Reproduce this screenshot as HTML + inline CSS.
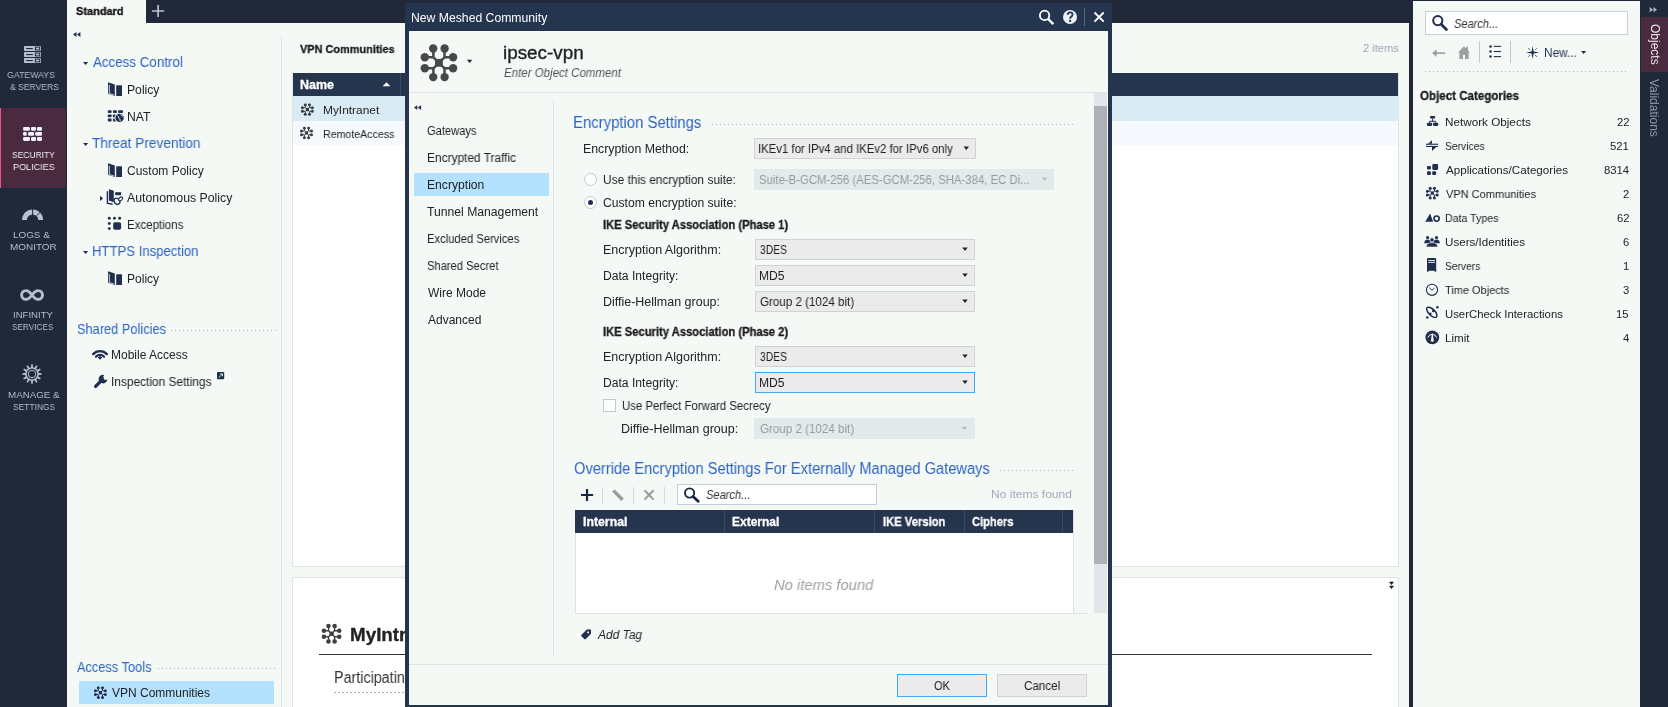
<!DOCTYPE html>
<html><head><meta charset="utf-8">
<style>
html,body{margin:0;padding:0;width:1668px;height:707px;overflow:hidden;background:#20283a;font-family:"Liberation Sans",sans-serif;}
.a{position:absolute;}
.t{position:absolute;white-space:nowrap;line-height:1;transform-origin:0 0;will-change:transform;}
svg{position:absolute;overflow:visible;}
.dd{position:absolute;background:#ebebeb;border:1px solid #cdd3d8;box-sizing:border-box;}
.dis{position:absolute;background:#e3eaeb;box-sizing:border-box;}
.dot{position:absolute;height:1px;background-image:linear-gradient(to right,#aab3bc 1px,transparent 1px);background-size:4px 1px;}
.sep{position:absolute;background:#dde3e8;}
</style></head><body>
<!-- left nav -->
<div class=a style="left:0;top:0;width:66px;height:707px;background:#20283a"></div>
<div class=a style="left:0;top:108px;width:66px;height:80px;background:#4a2a3f"></div>
<div class=a style="left:0;top:108px;width:1px;height:80px;background:#f0508a"></div>

<!-- top bar -->
<div class=a style="left:66px;top:0;width:1343px;height:23px;background:#20283a"></div>
<div class=a style="left:67px;top:0;width:79px;height:23px;background:#f5f9f6"></div>

<!-- left tree panel -->
<div class=a style="left:67px;top:23px;width:214px;height:684px;background:#f5f9f6"></div>

<!-- main area -->
<div class=a style="left:281px;top:23px;width:1128px;height:684px;background:#f5f9f6"></div>
<div class=a style="left:281px;top:36px;width:1px;height:671px;background:#dfe4e9"></div>
<div class=a style="left:292px;top:73px;width:1107px;height:494px;background:#fff;border-left:1px solid #dfe4e9;border-right:1px solid #dfe4e9;border-bottom:1px solid #dfe4e9;box-sizing:border-box"></div>
<div class=a style="left:293px;top:73px;width:1105px;height:23px;background:#26354e"></div>
<div class=a style="left:400px;top:73px;width:1px;height:23px;background:#3a4866"></div>
<div class=a style="left:293px;top:96px;width:1105px;height:25px;background:#d9ebf5"></div>
<div class=a style="left:293px;top:121px;width:1105px;height:24px;background:#f5f9fd"></div>
<div class=a style="left:292px;top:577px;width:1107px;height:130px;background:#fff;border-left:1px solid #dfe4e9;border-top:1px solid #dfe4e9;border-right:1px solid #dfe4e9;box-sizing:border-box"></div>
<div class=a style="left:319px;top:654px;width:1053px;height:1px;background:#333"></div>
<div class=dot style="left:334px;top:692px;width:80px;background-image:linear-gradient(to right,#9fb0c2 2px,transparent 2px)"></div>

<!-- right dark strip & right panel -->
<div class=a style="left:1409px;top:0;width:4px;height:707px;background:#20283a"></div>
<div class=a style="left:1413px;top:1px;width:227px;height:706px;background:#f5f9f6"></div>
<div class=a style="left:1640px;top:0;width:28px;height:707px;background:#20283a"></div>
<div class=a style="left:1641px;top:17px;width:27px;height:55px;background:#4a2a3f"></div>
<div class=a style="left:1425px;top:11px;width:203px;height:24px;background:#fff;border:1px solid #c9d0d8;box-sizing:border-box"></div>
<div class=dot style="left:1425px;top:71px;width:202px"></div>
<div class=a style="left:1479px;top:41px;width:1px;height:22px;background:#c0c6cc"></div>
<div class=a style="left:1510px;top:41px;width:1px;height:22px;background:#c0c6cc"></div>

<!-- dotted lines tree -->
<div class=dot style="left:171px;top:330px;width:106px"></div>
<div class=dot style="left:158px;top:668px;width:118px"></div>
<div class=a style="left:79px;top:681px;width:195px;height:23px;background:#b4e2fe"></div>

<svg width="1668" height="707" style="left:0;top:0">
<defs><symbol id="mesh" viewBox="0 0 38 38"><g fill="currentColor" stroke="currentColor"><path fill="none" d="M13.4 4.5V13.3H4.8M24.5 4.5V13.3H33.1M13.4 33.1V24.3H4.8M24.5 33.1V24.3H33.1M13.4 13.3L18.9 18.8M24.5 13.3L18.9 18.8M13.4 24.3L18.9 18.8M24.5 24.3L18.9 18.8"/><circle cx="13.2" cy="4.5" r="4.2" stroke="none"/><circle cx="24.6" cy="4.5" r="4.2" stroke="none"/><circle cx="4.8" cy="13.2" r="4.2" stroke="none"/><circle cx="33.1" cy="13.2" r="4.2" stroke="none"/><circle cx="4.8" cy="24.3" r="4.2" stroke="none"/><circle cx="33.1" cy="24.3" r="4.2" stroke="none"/><circle cx="13.2" cy="33.1" r="4.2" stroke="none"/><circle cx="24.6" cy="33.1" r="4.2" stroke="none"/><rect x="15.1" y="14.9" width="7.7" height="7.8" stroke="none"/></g></symbol><symbol id="mesh13" viewBox="0 0 13 13"><g fill="currentColor" stroke="currentColor"><path fill="none" stroke-width="1" d="M4.4 1.5V4.5H1.5M8.6 1.5V4.5H11.5M4.4 11.1V8.1H1.5M8.6 11.1V8.1H11.5"/><circle cx="4.4" cy="1.5" r="1.5" stroke="none"/><circle cx="8.6" cy="1.5" r="1.5" stroke="none"/><circle cx="1.5" cy="4.5" r="1.5" stroke="none"/><circle cx="11.5" cy="4.5" r="1.5" stroke="none"/><circle cx="1.5" cy="8.1" r="1.5" stroke="none"/><circle cx="11.5" cy="8.1" r="1.5" stroke="none"/><circle cx="4.4" cy="11.1" r="1.5" stroke="none"/><circle cx="8.6" cy="11.1" r="1.5" stroke="none"/><rect x="4.9" y="4.6" width="3.2" height="3.4" stroke="none"/></g></symbol></defs>
<rect x="24" y="46" width="17" height="5" rx="0.7" fill="#b5c0d0"/>
<rect x="26.2" y="48" width="6.6" height="1.1" fill="#20283a"/>
<rect x="35.4" y="47.1" width="4.3" height="2.8" fill="none" stroke="#20283a" stroke-width="1"/>
<rect x="24" y="52" width="17" height="5" rx="0.7" fill="#b5c0d0"/>
<rect x="26.2" y="54" width="6.6" height="1.1" fill="#20283a"/>
<rect x="35.4" y="53.1" width="4.3" height="2.8" fill="none" stroke="#20283a" stroke-width="1"/>
<rect x="24" y="58" width="17" height="5" rx="0.7" fill="#b5c0d0"/>
<rect x="26.2" y="60" width="6.6" height="1.1" fill="#20283a"/>
<rect x="35.4" y="59.1" width="4.3" height="2.8" fill="none" stroke="#20283a" stroke-width="1"/>
<rect x="23.1" y="126.9" width="6.8" height="3.9" rx="1.1" fill="#eef4fc"/>
<rect x="31" y="126.9" width="5.1" height="3.9" rx="1.1" fill="#eef4fc"/>
<rect x="37" y="126.9" width="5.0" height="3.9" rx="1.1" fill="#eef4fc"/>
<rect x="23.1" y="131.9" width="3.6" height="3.9" rx="1.1" fill="#eef4fc"/>
<rect x="28.1" y="131.9" width="5.9" height="3.9" rx="1.1" fill="#eef4fc"/>
<rect x="35.2" y="131.9" width="6.8" height="3.9" rx="1.1" fill="#eef4fc"/>
<rect x="23.1" y="137" width="6.8" height="3.9" rx="1.1" fill="#eef4fc"/>
<rect x="31" y="137" width="5.1" height="3.9" rx="1.1" fill="#eef4fc"/>
<rect x="37" y="137" width="5.0" height="3.9" rx="1.1" fill="#eef4fc"/>
<path d="M24.5 220 A8.1 8.1 0 0 1 40.7 220" fill="none" stroke="#b5c0d0" stroke-width="5"/>
<path d="M32.6 208 V215" stroke="#20283a" stroke-width="1"/>
<path d="M36.8 215.6 L40.6 211.8" stroke="#20283a" stroke-width="1"/>
<path d="M32 295C29.5 291.5 27.6 290.6 26 290.6A4.4 4.4 0 0 0 26 299.4C27.6 299.4 29.5 298.5 32 295C34.5 291.5 36.5 290.6 38.1 290.6A4.4 4.4 0 0 1 38.1 299.4C36.5 299.4 34.5 298.5 32 295Z" fill="none" stroke="#b5c0d0" stroke-width="2.9"/>
<path d="M30.24,367.43 L31.08,367.26 L31.19,364.33 L32.81,364.33 L32.92,367.26 L33.76,367.43 L34.57,367.70 L36.13,365.22 L37.54,366.03 L36.17,368.63 L36.81,369.19 L37.37,369.83 L39.97,368.46 L40.78,369.87 L38.30,371.43 L38.57,372.24 L38.74,373.08 L41.67,373.19 L41.67,374.81 L38.74,374.92 L38.57,375.76 L38.30,376.57 L40.78,378.13 L39.97,379.54 L37.37,378.17 L36.81,378.81 L36.17,379.37 L37.54,381.97 L36.13,382.78 L34.57,380.30 L33.76,380.57 L32.92,380.74 L32.81,383.67 L31.19,383.67 L31.08,380.74 L30.24,380.57 L29.43,380.30 L27.87,382.78 L26.46,381.97 L27.83,379.37 L27.19,378.81 L26.63,378.17 L24.03,379.54 L23.22,378.13 L25.70,376.57 L25.43,375.76 L25.26,374.92 L22.33,374.81 L22.33,373.19 L25.26,373.08 L25.43,372.24 L25.70,371.43 L23.22,369.87 L24.03,368.46 L26.63,369.83 L27.19,369.19 L27.83,368.63 L26.46,366.03 L27.87,365.22 L29.43,367.70 Z" fill="#b5c0d0"/>
<circle cx="32" cy="374" r="5.4" fill="#20283a"/>
<circle cx="32" cy="374" r="3.7" fill="none" stroke="#b5c0d0" stroke-width="1.3" opacity="0.8"/>
<path d="M152 11H164.2M158.1 5V17" stroke="#b4bfcf" stroke-width="1.7"/>
<path d="M73 34.5L76.5 32V37ZM76.9 34.5L80.4 32V37Z" fill="#1b2c4e"/>
<path d="M83 62H88.2L85.6 65.1Z" fill="#1f2f4d"/>
<path d="M83 143H88.2L85.6 146.1Z" fill="#1f2f4d"/>
<path d="M83 251H88.2L85.6 254.1Z" fill="#1f2f4d"/>
<path d="M100 195.8L103.1 198.4L100 201Z" fill="#1f2f4d"/>
<g transform="translate(107.8,82.2)"><path fill="#1f2f4d" d="M0.2 0 L7 2.3 V13.8 L0.2 11.6 Z"/><path fill="none" stroke="#f5f9f6" stroke-width="0.8" d="M1.5 2.6V11.2L6 12.8"/><rect x="8.4" y="3.1" width="5.8" height="10.7" fill="#1f2f4d"/></g>
<g transform="translate(107.8,163.2)"><path fill="#1f2f4d" d="M0.2 0 L7 2.3 V13.8 L0.2 11.6 Z"/><path fill="none" stroke="#f5f9f6" stroke-width="0.8" d="M1.5 2.6V11.2L6 12.8"/><rect x="8.4" y="3.1" width="5.8" height="10.7" fill="#1f2f4d"/></g>
<g transform="translate(107.8,271.2)"><path fill="#1f2f4d" d="M0.2 0 L7 2.3 V13.8 L0.2 11.6 Z"/><path fill="none" stroke="#f5f9f6" stroke-width="0.8" d="M1.5 2.6V11.2L6 12.8"/><rect x="8.4" y="3.1" width="5.8" height="10.7" fill="#1f2f4d"/></g>
<rect x="107.8" y="110.2" width="3.8" height="2.9" rx="0.8" fill="#1f2f4d"/>
<rect x="112.9" y="110.2" width="4" height="2.9" rx="0.8" fill="#1f2f4d"/>
<rect x="118.1" y="110.2" width="4.9" height="2.9" rx="0.8" fill="#1f2f4d"/>
<rect x="107.8" y="114.4" width="3.8" height="2.9" rx="0.8" fill="#1f2f4d"/>
<rect x="112.9" y="114.4" width="4" height="2.9" rx="0.8" fill="#1f2f4d"/>
<rect x="118.1" y="114.4" width="4.9" height="2.9" rx="0.8" fill="#1f2f4d"/>
<rect x="107.8" y="118.6" width="3.8" height="2.9" rx="0.8" fill="#1f2f4d"/>
<rect x="112.9" y="118.6" width="4" height="2.9" rx="0.8" fill="#1f2f4d"/>
<rect x="118.1" y="118.6" width="4.9" height="2.9" rx="0.8" fill="#1f2f4d"/>
<circle cx="119.6" cy="117.9" r="5" fill="#f5f9f6"/>
<circle cx="119.6" cy="117.9" r="4.2" fill="#1f2f4d"/>
<path d="M117.5 115.5 Q119 116.5 118.6 118 Q120.5 118.5 120.2 121.2 M120.5 114.5 Q121.5 116 123 116.3" fill="none" stroke="#f5f9f6" stroke-width="0.9"/>
<path fill="#1f2f4d" d="M108.9 189.2L113.8 190.8V202.2L108.9 200.6Z"/>
<path fill="none" stroke="#1f2f4d" stroke-width="1.4" d="M107.4 191.2V203.1L112.6 204.3"/>
<rect x="115.2" y="192.2" width="5.9" height="3" fill="#1f2f4d"/>
<ellipse cx="117" cy="201.3" rx="2.6" ry="3.3" transform="rotate(-40 117 201.3)" fill="#f5f9f6" stroke="#1f2f4d" stroke-width="1.3"/>
<ellipse cx="120.6" cy="198.9" rx="1.5" ry="2.4" transform="rotate(50 120.6 198.9)" fill="#f5f9f6" stroke="#1f2f4d" stroke-width="1.1"/>
<circle cx="109.3" cy="218.3" r="1.45" fill="#1f2f4d"/>
<circle cx="114.5" cy="218.3" r="1.45" fill="#1f2f4d"/>
<circle cx="119.6" cy="218.3" r="1.45" fill="#1f2f4d"/>
<circle cx="109.3" cy="223.5" r="1.45" fill="#1f2f4d"/>
<circle cx="109.3" cy="228.6" r="1.45" fill="#1f2f4d"/>
<rect x="113.2" y="222.2" width="7.9" height="7.5" rx="1.6" fill="#1f2f4d"/>
<path d="M93.13 354.09 A9.4 9.4 0 0 1 106.87 354.09" fill="none" stroke="#1f2f4d" stroke-width="2.4" stroke-linecap="round"/>
<path d="M95.90 356.68 A5.6 5.6 0 0 1 104.10 356.68" fill="none" stroke="#1f2f4d" stroke-width="2.2" stroke-linecap="round"/>
<path d="M97.7 357.4 A3.2 3.2 0 0 1 102.3 357.4 L100 359.8Z" fill="#1f2f4d"/>
<path d="M95.6 386.4 L101.8 380.2" stroke="#1f2f4d" stroke-width="3.3" stroke-linecap="round"/>
<path d="M104.2 375 A4.3 4.3 0 1 0 107.2 379.4 L104.6 380 L103.2 376.8 Z" fill="#1f2f4d"/>
<rect x="217" y="372" width="7.2" height="7.2" rx="0.8" fill="#1f2f4d"/>
<path d="M219 377.4 L222.3 374.1 M220.2 373.9H222.5V376.2" fill="none" stroke="#f5f9f6" stroke-width="0.9"/>
<use href="#mesh13" x="93.9" y="686.3" width="13" height="13" style="color:#263149"/>
<use href="#mesh13" x="300.9" y="103.2" width="13" height="13" style="color:#3a3d3f"/>
<use href="#mesh13" x="300" y="126.6" width="13" height="13" style="color:#3a3d3f"/>
<path d="M382.6 86.2H390.4L386.5 82.2Z" fill="#fff"/>
<use href="#mesh" x="321.3" y="623.6" width="20.6" height="20.6" stroke-width="2.6" style="color:#3d3f40"/>
<path d="M1389 581.8H1394L1391.5 585ZM1389 585.8H1394L1391.5 589Z" fill="#111a33"/>
<circle cx="1437.8" cy="20.6" r="4.6" fill="none" stroke="#1f2f4d" stroke-width="2"/>
<path d="M1441.2 24.2L1446.4 29.4" stroke="#1f2f4d" stroke-width="2.8" stroke-linecap="round"/>
<path d="M1433.5 53.1H1445.2" stroke="#9aa0a0" stroke-width="1.6"/>
<path d="M1432.2 53.1L1436.6 49.2V56.9Z" fill="#9aa0a0"/>
<path d="M1458 52.6L1464 46.2L1470 52.6Z M1459.4 52H1468.6V58.9H1459.4Z M1466.2 46.8H1468V50H1466.2Z" fill="#9aa0a0"/>
<rect x="1463" y="54.8" width="2" height="4.1" fill="#f5f9f6"/>
<circle cx="1490.5" cy="46.4" r="1.25" fill="#1f2f4d"/>
<rect x="1493.8" y="45.85" width="7.2" height="1.1" fill="#1f2f4d"/>
<circle cx="1490.5" cy="51.5" r="1.25" fill="#1f2f4d"/>
<rect x="1493.8" y="50.95" width="7.2" height="1.1" fill="#1f2f4d"/>
<circle cx="1490.5" cy="56.6" r="1.25" fill="#1f2f4d"/>
<rect x="1493.8" y="56.050000000000004" width="7.2" height="1.1" fill="#1f2f4d"/>
<path d="M1532.6 46L1533.6 51.5L1539.2 52.5L1533.6 53.5L1532.6 59L1531.6 53.5L1526 52.5L1531.6 51.5Z" fill="#1f2f4d"/>
<path d="M1528.4 48.3L1529.9 49.8M1536.8 48.3L1535.3 49.8M1528.4 56.7L1529.9 55.2M1536.8 56.7L1535.3 55.2" stroke="#1f2f4d" stroke-width="0.9"/>
<path d="M1581 51H1586.2L1583.6 54.1Z" fill="#1f2f4d"/>
<path d="M1649.7 7L1653.2 9.65L1649.7 12.3ZM1653.5 7L1657 9.65L1653.5 12.3Z" fill="#aab4c4"/>
<rect x="1430" y="116" width="5.2" height="2.6" rx="1" fill="#1f2f4d"/><path d="M1432.6 118.5V121.3M1429.6 122.8V121.3H1435.6V122.8" fill="none" stroke="#1f2f4d" stroke-width="1"/><rect x="1426.9" y="122.8" width="5.3" height="3.1" rx="1.1" fill="#1f2f4d"/><rect x="1433" y="122.8" width="5.3" height="3.1" rx="1.1" fill="#1f2f4d"/>
<rect x="1426" y="143.7" width="12" height="1.1" fill="#1f2f4d"/><rect x="1426" y="145.9" width="12" height="1.1" fill="#1f2f4d"/><path d="M1428 143.7L1432 140.2V143.7Z M1432 147V151L1436.2 147Z" fill="#1f2f4d"/>
<rect x="1427" y="166" width="3.9" height="3.6" rx="1" fill="#1f2f4d"/><rect x="1427" y="171.3" width="3.9" height="3.6" rx="1" fill="#1f2f4d"/><rect x="1432.2" y="171.3" width="3.9" height="3.6" rx="1" fill="#1f2f4d"/><rect x="1432.3" y="164" width="5.8" height="5.9" rx="1.1" fill="#1f2f4d"/>
<use href="#mesh13" x="1425.8" y="186.8" width="13" height="13" style="color:#1f2f4d"/>
<path d="M1430.1 213.5L1433.1 221.7H1425.2Z" fill="#1f2f4d"/><circle cx="1436.6" cy="218.6" r="2.6" fill="#f5f9f6" stroke="#1f2f4d" stroke-width="1.6"/>
<circle cx="1427.6" cy="237.5" r="1.6" fill="#1f2f4d"/><circle cx="1436.5" cy="237.5" r="1.6" fill="#1f2f4d"/><path d="M1424.2 243.2Q1424.5 239.6 1427.6 239.6Q1430.4 239.6 1430.6 242V243.2Z M1433.4 242Q1433.6 239.6 1436.5 239.6Q1439.6 239.6 1439.9 243.2H1433.4Z" fill="#1f2f4d"/><circle cx="1432" cy="239.9" r="2.1" fill="#1f2f4d" stroke="#f5f9f6" stroke-width="0.6"/><path d="M1426.2 247Q1426.6 242.6 1432 242.6Q1437.4 242.6 1437.8 247Z" fill="#1f2f4d" stroke="#f5f9f6" stroke-width="0.6"/>
<path d="M1427 259.2Q1427 258 1428.2 258H1435Q1436.2 258 1436.2 259.2V271.8H1435L1434.3 270.8H1429L1428.2 271.8H1427Z" fill="#1f2f4d"/><rect x="1428.3" y="260" width="6.6" height="0.9" fill="#f5f9f6"/><rect x="1428.3" y="261.9" width="6.6" height="0.9" fill="#f5f9f6"/>
<circle cx="1432" cy="289.8" r="5.6" fill="none" stroke="#1f2f4d" stroke-width="1.1"/><path d="M1429.3 287.8L1432 290.3L1434.4 288.2" fill="none" stroke="#1f2f4d" stroke-width="1"/>
<ellipse cx="1431.8" cy="312.3" rx="6.6" ry="3.1" transform="rotate(45 1431.8 312.3)" fill="none" stroke="#1f2f4d" stroke-width="1.5"/><circle cx="1433.3" cy="310.9" r="1.3" fill="#1f2f4d"/><circle cx="1430.3" cy="313.8" r="1.3" fill="#1f2f4d"/><circle cx="1437.4" cy="307.2" r="1.25" fill="#1f2f4d"/><circle cx="1427.3" cy="317.4" r="1.25" fill="#1f2f4d"/>
<circle cx="1432.3" cy="337.3" r="6.9" fill="#1f2f4d"/><path d="M1427.9 337.6A4.6 4.6 0 0 1 1436.7 337.6" fill="none" stroke="#f5f9f6" stroke-width="1"/><path d="M1431.9 333.6H1432.7L1433.7 340.6Q1433.6 342 1432.3 342Q1431 342 1430.9 340.6Z" fill="#f5f9f6"/>
</svg>
<div class=t style="left:7.46px;top:70.00px;font-size:9.6px;color:#b3bdca;transform:scaleX(0.9111);">GATEWAYS</div>
<div class=t style="left:9.60px;top:82.00px;font-size:9.6px;color:#b3bdca;transform:scaleX(0.8944);">&amp; SERVERS</div>
<div class=t style="left:12.32px;top:150.00px;font-size:9.6px;color:#f0f0f4;transform:scaleX(0.8830);">SECURITY</div>
<div class=t style="left:12.87px;top:162.00px;font-size:9.6px;color:#f0f0f4;transform:scaleX(0.9453);">POLICIES</div>
<div class=t style="left:12.61px;top:230.00px;font-size:9.6px;color:#b3bdca;transform:scaleX(1.0287);">LOGS &amp;</div>
<div class=t style="left:9.90px;top:242.00px;font-size:9.6px;color:#b3bdca;transform:scaleX(1.0360);">MONITOR</div>
<div class=t style="left:12.54px;top:310.00px;font-size:9.6px;color:#b3bdca;transform:scaleX(0.9916);">INFINITY</div>
<div class=t style="left:12.33px;top:322.00px;font-size:9.6px;color:#b3bdca;transform:scaleX(0.8552);">SERVICES</div>
<div class=t style="left:7.92px;top:390.00px;font-size:9.6px;color:#b3bdca;transform:scaleX(1.0195);">MANAGE &amp;</div>
<div class=t style="left:13.32px;top:402.00px;font-size:9.6px;color:#b3bdca;transform:scaleX(0.8804);">SETTINGS</div>
<div class=t style="left:76.47px;top:6.00px;font-size:11.5px;font-weight:700;-webkit-text-stroke:0.3px #111;color:#111;transform:scaleX(0.9537);">Standard</div>
<div class=t style="left:92.50px;top:55.00px;font-size:14px;color:#2d64c0;transform:scaleX(0.9545);">Access Control</div>
<div class=t style="left:126.53px;top:84.00px;font-size:12px;color:#222;transform:scaleX(1.0135);">Policy</div>
<div class=t style="left:126.53px;top:111.00px;font-size:12px;color:#222;transform:scaleX(1.0137);">NAT</div>
<div class=t style="left:92.43px;top:136.00px;font-size:14px;color:#2d64c0;transform:scaleX(0.9745);">Threat Prevention</div>
<div class=t style="left:127.00px;top:165.00px;font-size:12px;color:#222;">Custom Policy</div>
<div class=t style="left:127.00px;top:192.00px;font-size:12px;color:#222;transform:scaleX(1.0261);">Autonomous Policy</div>
<div class=t style="left:126.68px;top:219.00px;font-size:12px;color:#222;transform:scaleX(0.9599);">Exceptions</div>
<div class=t style="left:91.65px;top:244.00px;font-size:14px;color:#2d64c0;transform:scaleX(0.9374);">HTTPS Inspection</div>
<div class=t style="left:126.64px;top:273.00px;font-size:12px;color:#222;transform:scaleX(1.0039);">Policy</div>
<div class=t style="left:76.82px;top:322.00px;font-size:14px;color:#2d64c0;transform:scaleX(0.9150);">Shared Policies</div>
<div class=t style="left:111.34px;top:349.00px;font-size:12px;color:#222;">Mobile Access</div>
<div class=t style="left:111.23px;top:376.00px;font-size:12px;color:#222;transform:scaleX(0.9910);">Inspection Settings</div>
<div class=t style="left:77.20px;top:660.00px;font-size:14px;color:#2d64c0;transform:scaleX(0.9149);">Access Tools</div>
<div class=t style="left:111.94px;top:687.00px;font-size:12px;color:#222;">VPN Communities</div>
<div class=t style="left:299.85px;top:44.00px;font-size:11.8px;font-weight:700;-webkit-text-stroke:0.3px #1a1a1a;color:#1a1a1a;transform:scaleX(0.9251);">VPN Communities</div>
<div class=t style="left:1362.94px;top:43.00px;font-size:11.5px;color:#9ba6b4;transform:scaleX(0.9665);">2 items</div>
<div class=t style="left:299.79px;top:79.00px;font-size:12px;font-weight:700;-webkit-text-stroke:0.3px #ffffff;color:#ffffff;transform:scaleX(1.0381);">Name</div>
<div class=t style="left:322.85px;top:105.00px;font-size:11.3px;color:#222;transform:scaleX(1.0539);">MyIntranet</div>
<div class=t style="left:322.95px;top:129.00px;font-size:11.3px;color:#222;transform:scaleX(0.9398);">RemoteAccess</div>
<div class=t style="left:350.08px;top:626.00px;font-size:18px;font-weight:700;-webkit-text-stroke:0.3px #222;color:#222;transform:scaleX(1.0453);">MyIntranet</div>
<div class=t style="left:333.65px;top:670.00px;font-size:16px;color:#333;transform:scaleX(0.8945);">Participating Gateways</div>
<div class=t style="left:1453.57px;top:18.00px;font-size:12px;font-style:italic;color:#333;transform:scaleX(0.9221);">Search...</div>
<div class=t style="left:1544.36px;top:47.00px;font-size:12px;color:#1f3050;transform:scaleX(0.9821);">New...</div>
<div class=t style="left:1420.34px;top:90.00px;font-size:12px;font-weight:700;-webkit-text-stroke:0.3px #1a1a1a;color:#1a1a1a;transform:scaleX(0.9636);">Object Categories</div>
<div class=t style="left:1444.66px;top:117.00px;font-size:11.3px;color:#222;transform:scaleX(1.0357);">Network Objects</div>
<div class=t style="left:1616.52px;top:117.00px;font-size:11.3px;color:#222;">22</div>
<div class=t style="left:1445.14px;top:141.00px;font-size:11.3px;color:#222;transform:scaleX(0.9121);">Services</div>
<div class=t style="left:1610.19px;top:141.00px;font-size:11.3px;color:#222;">521</div>
<div class=t style="left:1445.60px;top:165.00px;font-size:11.3px;color:#222;transform:scaleX(1.0278);">Applications/Categories</div>
<div class=t style="left:1603.70px;top:165.00px;font-size:11.3px;color:#222;">8314</div>
<div class=t style="left:1445.54px;top:189.00px;font-size:11.3px;color:#222;transform:scaleX(0.9753);">VPN Communities</div>
<div class=t style="left:1622.79px;top:189.00px;font-size:11.3px;color:#222;">2</div>
<div class=t style="left:1444.75px;top:213.00px;font-size:11.3px;color:#222;transform:scaleX(0.9398);">Data Types</div>
<div class=t style="left:1616.52px;top:213.00px;font-size:11.3px;color:#222;">62</div>
<div class=t style="left:1444.73px;top:237.00px;font-size:11.3px;color:#222;transform:scaleX(1.0272);">Users/Identities</div>
<div class=t style="left:1622.68px;top:237.00px;font-size:11.3px;color:#222;">6</div>
<div class=t style="left:1445.14px;top:261.00px;font-size:11.3px;color:#222;transform:scaleX(0.9073);">Servers</div>
<div class=t style="left:1622.74px;top:261.00px;font-size:11.3px;color:#222;">1</div>
<div class=t style="left:1445.38px;top:285.00px;font-size:11.3px;color:#222;transform:scaleX(0.9719);">Time Objects</div>
<div class=t style="left:1622.68px;top:285.00px;font-size:11.3px;color:#222;">3</div>
<div class=t style="left:1444.75px;top:309.00px;font-size:11.3px;color:#222;transform:scaleX(1.0041);">UserCheck Interactions</div>
<div class=t style="left:1616.41px;top:309.00px;font-size:11.3px;color:#222;">15</div>
<div class=t style="left:1444.67px;top:333.00px;font-size:11.3px;color:#222;transform:scaleX(1.0270);">Limit</div>
<div class=t style="left:1622.57px;top:333.00px;font-size:11.3px;color:#222;">4</div>
<!-- dialog -->
<div class=a style="left:405px;top:3px;width:707px;height:704px;background:#26354f"></div>
<div class=a style="left:409px;top:31px;width:699px;height:674px;background:#f5f9f6"></div>
<div class=a style="left:410px;top:92px;width:698px;height:1px;background:#dde3e8"></div>
<div class=a style="left:553px;top:100px;width:1px;height:556px;background:#dde3e8"></div>
<div class=a style="left:414px;top:173px;width:135px;height:23px;background:#b4e2fe"></div>
<div class=a style="left:1094px;top:93px;width:13px;height:520px;background:#e1e6ea"></div>
<div class=a style="left:1094px;top:106px;width:13px;height:458px;background:#adb0b4"></div>
<div class=a style="left:409px;top:664px;width:699px;height:1px;background:#dde3e8"></div>
<div class=a style="left:1084px;top:8px;width:1px;height:18px;background:#5b6679"></div>

<div class=dot style="left:712px;top:124px;width:362px"></div>
<div class=dd style="left:754px;top:138px;width:222px;height:21px"></div>
<div class=dis style="left:754px;top:169px;width:300px;height:21px"></div>
<div class=dd style="left:755px;top:239px;width:220px;height:21px"></div>
<div class=dd style="left:755px;top:265px;width:220px;height:21px"></div>
<div class=dd style="left:755px;top:291px;width:220px;height:21px"></div>
<div class=dd style="left:755px;top:346px;width:220px;height:21px"></div>
<div class=dd style="left:755px;top:372px;width:220px;height:21px;border-color:#44a6ef"></div>
<div class=dis style="left:754px;top:418px;width:221px;height:21px"></div>
<div class=a style="left:603px;top:399px;width:13px;height:13px;background:#fff;border:1px solid #c5c9cd;box-sizing:border-box"></div>
<div class=a style="left:584px;top:173px;width:13px;height:13px;border-radius:50%;background:#fff;border:1px solid #c5c9cd;box-sizing:border-box"></div>
<div class=a style="left:584px;top:196px;width:13px;height:13px;border-radius:50%;background:#fff;border:1px solid #c5c9cd;box-sizing:border-box"></div>
<div class=a style="left:588px;top:200px;width:5px;height:5px;border-radius:50%;background:#1f2f4d"></div>

<div class=dot style="left:1000px;top:470px;width:74px"></div>
<div class=a style="left:602px;top:487px;width:1px;height:17px;background:#d5dade"></div>
<div class=a style="left:633px;top:487px;width:1px;height:17px;background:#d5dade"></div>
<div class=a style="left:664px;top:487px;width:1px;height:17px;background:#d5dade"></div>
<div class=a style="left:677px;top:484px;width:200px;height:21px;background:#fff;border:1px solid #c5cbd2;box-sizing:border-box"></div>
<div class=a style="left:575px;top:510px;width:499px;height:104px;background:#fff;border:1px solid #dde2e6;border-top:none;box-sizing:border-box"></div>
<div class=a style="left:575px;top:510px;width:498px;height:23px;background:#26354e"></div>
<div class=a style="left:724px;top:510px;width:1px;height:23px;background:#3a4866"></div>
<div class=a style="left:874px;top:510px;width:1px;height:23px;background:#3a4866"></div>
<div class=a style="left:964px;top:510px;width:1px;height:23px;background:#3a4866"></div>
<div class=a style="left:1062px;top:510px;width:1px;height:23px;background:#3a4866"></div>
<div class=a style="left:575px;top:613px;width:512px;height:1px;background:#dde2e6"></div>

<div class=a style="left:897px;top:674px;width:90px;height:23px;background:#ebebeb;border:1px solid #40a8f4;box-sizing:border-box"></div>
<div class=a style="left:997px;top:674px;width:90px;height:23px;background:#ebebeb;border:1px solid #cfd3d6;box-sizing:border-box"></div>

<svg width="1668" height="707" style="left:0;top:0">
<circle cx="1044.6" cy="15.4" r="4.7" fill="none" stroke="#fff" stroke-width="1.8"/>
<path d="M1048 18.8L1053.3 24.1" stroke="#fff" stroke-width="2.4"/>
<circle cx="1070" cy="17" r="7" fill="#eaf2fb"/>
<path d="M1067.6 14.9Q1067.8 12.3 1070.1 12.3Q1072.6 12.3 1072.6 14.6Q1072.6 16.1 1071 16.9Q1070.1 17.4 1070.1 18.7" fill="none" stroke="#26354f" stroke-width="1.8"/><rect x="1069.1" y="19.9" width="2" height="2" fill="#26354f"/>
<path d="M1094.5 12.5L1103.7 21.7M1103.7 12.5L1094.5 21.7" stroke="#fff" stroke-width="1.9"/>
<use href="#mesh" x="420" y="44" width="38" height="38" stroke-width="2.5" style="color:#454a48"/>
<path d="M467 59.8H472.2L469.6 62.9Z" fill="#222"/>
<path d="M414 107.6L417.3 105.2V110ZM417.8 107.6L421.1 105.2V110Z" fill="#1b2c4e"/>
<path d="M963.5999999999999 146.6H969.0L966.3 150.0Z" fill="#222"/>
<path d="M962.3 247.6H967.7L965 251.0Z" fill="#222"/>
<path d="M962.3 273.6H967.7L965 277.0Z" fill="#222"/>
<path d="M962.3 299.6H967.7L965 303.0Z" fill="#222"/>
<path d="M962.3 354.6H967.7L965 358.0Z" fill="#222"/>
<path d="M962.3 380.6H967.7L965 384.0Z" fill="#222"/>
<path d="M961.8 426.8H967.2L964.5 430.2Z" fill="#b3bac1"/>
<path d="M1041.8 177.6H1047.2L1044.5 181.0Z" fill="#b3bac1"/>
<path d="M581 495H593.1M587 488.9V501.1" stroke="#1a2744" stroke-width="2.2"/>
<path d="M613.2 490.4L622.6 499.8" stroke="#979c9c" stroke-width="3.4"/><path d="M612.2 489.3L614.2 491.3" stroke="#f5f9f6" stroke-width="0.7"/>
<path d="M644.5 490.3L653.6 499.6M653.6 490.3L644.5 499.6" stroke="#979c9c" stroke-width="2"/>
<circle cx="689.6" cy="493" r="4.6" fill="none" stroke="#1a2744" stroke-width="1.9"/>
<path d="M693 496.4L698.2 501.3" stroke="#1a2744" stroke-width="2.8" stroke-linecap="round"/>
<path d="M581.6 634.7L586.8 629.5H591V633.7L585.8 638.9Q585 639.7 584.2 638.9L581.6 636.3Q580.8 635.5 581.6 634.7Z" fill="#1f2f4d"/><rect x="587.2" y="631.5" width="1.8" height="1.8" fill="#f5f9f6"/>
</svg>
<div class=t style="left:410.52px;top:12.00px;font-size:12px;color:#ffffff;transform:scaleX(1.0167);">New Meshed Community</div>
<div class=t style="left:503.07px;top:44.00px;font-size:18.3px;-webkit-text-stroke:0.35px #222;color:#222;transform:scaleX(1.0323);">ipsec-vpn</div>
<div class=t style="left:503.95px;top:67.00px;font-size:12px;font-style:italic;color:#555;transform:scaleX(0.9594);">Enter Object Comment</div>
<div class=t style="left:427.14px;top:125.00px;font-size:12px;color:#222;transform:scaleX(0.9289);">Gateways</div>
<div class=t style="left:426.75px;top:152.00px;font-size:12px;color:#222;transform:scaleX(0.9914);">Encrypted Traffic</div>
<div class=t style="left:426.73px;top:179.00px;font-size:12px;color:#222;transform:scaleX(1.0116);">Encryption</div>
<div class=t style="left:427.46px;top:206.00px;font-size:12px;color:#222;transform:scaleX(1.0145);">Tunnel Management</div>
<div class=t style="left:426.80px;top:233.00px;font-size:12px;color:#222;transform:scaleX(0.9351);">Excluded Services</div>
<div class=t style="left:427.20px;top:260.00px;font-size:12px;color:#222;transform:scaleX(0.9306);">Shared Secret</div>
<div class=t style="left:427.64px;top:287.00px;font-size:12px;color:#222;transform:scaleX(0.9927);">Wire Mode</div>
<div class=t style="left:427.70px;top:314.00px;font-size:12px;color:#222;">Advanced</div>
<div class=t style="left:573.41px;top:115.00px;font-size:16px;color:#2d64c0;transform:scaleX(0.9309);">Encryption Settings</div>
<div class=t style="left:583.41px;top:143.00px;font-size:12px;color:#222;transform:scaleX(1.0272);">Encryption Method:</div>
<div class=t style="left:758.28px;top:143.00px;font-size:12px;color:#222;transform:scaleX(0.9478);">IKEv1 for IPv4 and IKEv2 for IPv6 only</div>
<div class=t style="left:602.71px;top:174.00px;font-size:12px;color:#222;transform:scaleX(0.9905);">Use this encryption suite:</div>
<div class=t style="left:758.79px;top:174.00px;font-size:12px;color:#929c9d;transform:scaleX(0.9460);">Suite-B-GCM-256 (AES-GCM-256, SHA-384, EC Di...</div>
<div class=t style="left:602.99px;top:197.00px;font-size:12px;color:#222;transform:scaleX(1.0114);">Custom encryption suite:</div>
<div class=t style="left:602.77px;top:219.00px;font-size:12px;font-weight:700;-webkit-text-stroke:0.3px #1a1a1a;color:#1a1a1a;transform:scaleX(0.9339);">IKE Security Association (Phase 1)</div>
<div class=t style="left:602.50px;top:244.00px;font-size:12px;color:#222;transform:scaleX(1.0422);">Encryption Algorithm:</div>
<div class=t style="left:759.99px;top:244.00px;font-size:12px;color:#222;transform:scaleX(0.8614);">3DES</div>
<div class=t style="left:602.53px;top:270.00px;font-size:12px;color:#222;transform:scaleX(1.0096);">Data Integrity:</div>
<div class=t style="left:759.43px;top:270.00px;font-size:12px;color:#222;transform:scaleX(1.0092);">MD5</div>
<div class=t style="left:602.50px;top:296.00px;font-size:12px;color:#222;transform:scaleX(1.0399);">Diffie-Hellman group:</div>
<div class=t style="left:759.82px;top:296.00px;font-size:12px;color:#222;transform:scaleX(0.9661);">Group 2 (1024 bit)</div>
<div class=t style="left:602.77px;top:326.00px;font-size:12px;font-weight:700;-webkit-text-stroke:0.3px #1a1a1a;color:#1a1a1a;transform:scaleX(0.9339);">IKE Security Association (Phase 2)</div>
<div class=t style="left:602.50px;top:351.00px;font-size:12px;color:#222;transform:scaleX(1.0422);">Encryption Algorithm:</div>
<div class=t style="left:759.99px;top:351.00px;font-size:12px;color:#222;transform:scaleX(0.8614);">3DES</div>
<div class=t style="left:602.53px;top:377.00px;font-size:12px;color:#222;transform:scaleX(1.0096);">Data Integrity:</div>
<div class=t style="left:759.43px;top:377.00px;font-size:12px;color:#222;transform:scaleX(1.0092);">MD5</div>
<div class=t style="left:621.55px;top:400.00px;font-size:12px;color:#222;transform:scaleX(0.9472);">Use Perfect Forward Secrecy</div>
<div class=t style="left:621.40px;top:423.00px;font-size:12px;color:#222;transform:scaleX(1.0417);">Diffie-Hellman group:</div>
<div class=t style="left:759.82px;top:423.00px;font-size:12px;color:#929c9d;transform:scaleX(0.9661);">Group 2 (1024 bit)</div>
<div class=t style="left:573.94px;top:461.00px;font-size:16px;color:#2d64c0;transform:scaleX(0.9168);">Override Encryption Settings For Externally Managed Gateways</div>
<div class=t style="left:705.67px;top:489.00px;font-size:12px;font-style:italic;color:#333;transform:scaleX(0.9264);">Search...</div>
<div class=t style="left:991.34px;top:489.00px;font-size:11.5px;color:#a0aab8;transform:scaleX(1.0466);">No items found</div>
<div class=t style="left:582.80px;top:516.00px;font-size:12px;font-weight:700;-webkit-text-stroke:0.3px #ffffff;color:#ffffff;transform:scaleX(1.0249);">Internal</div>
<div class=t style="left:731.72px;top:516.00px;font-size:12px;font-weight:700;-webkit-text-stroke:0.3px #ffffff;color:#ffffff;">External</div>
<div class=t style="left:882.67px;top:516.00px;font-size:12px;font-weight:700;-webkit-text-stroke:0.3px #ffffff;color:#ffffff;transform:scaleX(0.9362);">IKE Version</div>
<div class=t style="left:972.05px;top:516.00px;font-size:12px;font-weight:700;-webkit-text-stroke:0.3px #ffffff;color:#ffffff;transform:scaleX(0.9272);">Ciphers</div>
<div class=t style="left:773.76px;top:577.00px;font-size:15px;font-style:italic;color:#a0a0a0;transform:scaleX(0.9844);">No items found</div>
<div class=t style="left:597.90px;top:629.00px;font-size:12px;font-style:italic;color:#222;transform:scaleX(0.9933);">Add Tag</div>
<div class=t style="left:934.20px;top:680.00px;font-size:12px;color:#222;transform:scaleX(0.9233);">OK</div>
<div class=t style="left:1024.02px;top:680.00px;font-size:12px;color:#222;transform:scaleX(0.9683);">Cancel</div>

<!-- rotated tabs -->
<div class=t style="left:1661px;top:24px;font-size:12px;color:#ece4ea;transform:rotate(90deg);transform-origin:0 0">Objects</div>
<div class=t style="left:1660px;top:79px;font-size:12px;color:#8e99ab;transform:rotate(90deg);transform-origin:0 0">Validations</div>
</body></html>
